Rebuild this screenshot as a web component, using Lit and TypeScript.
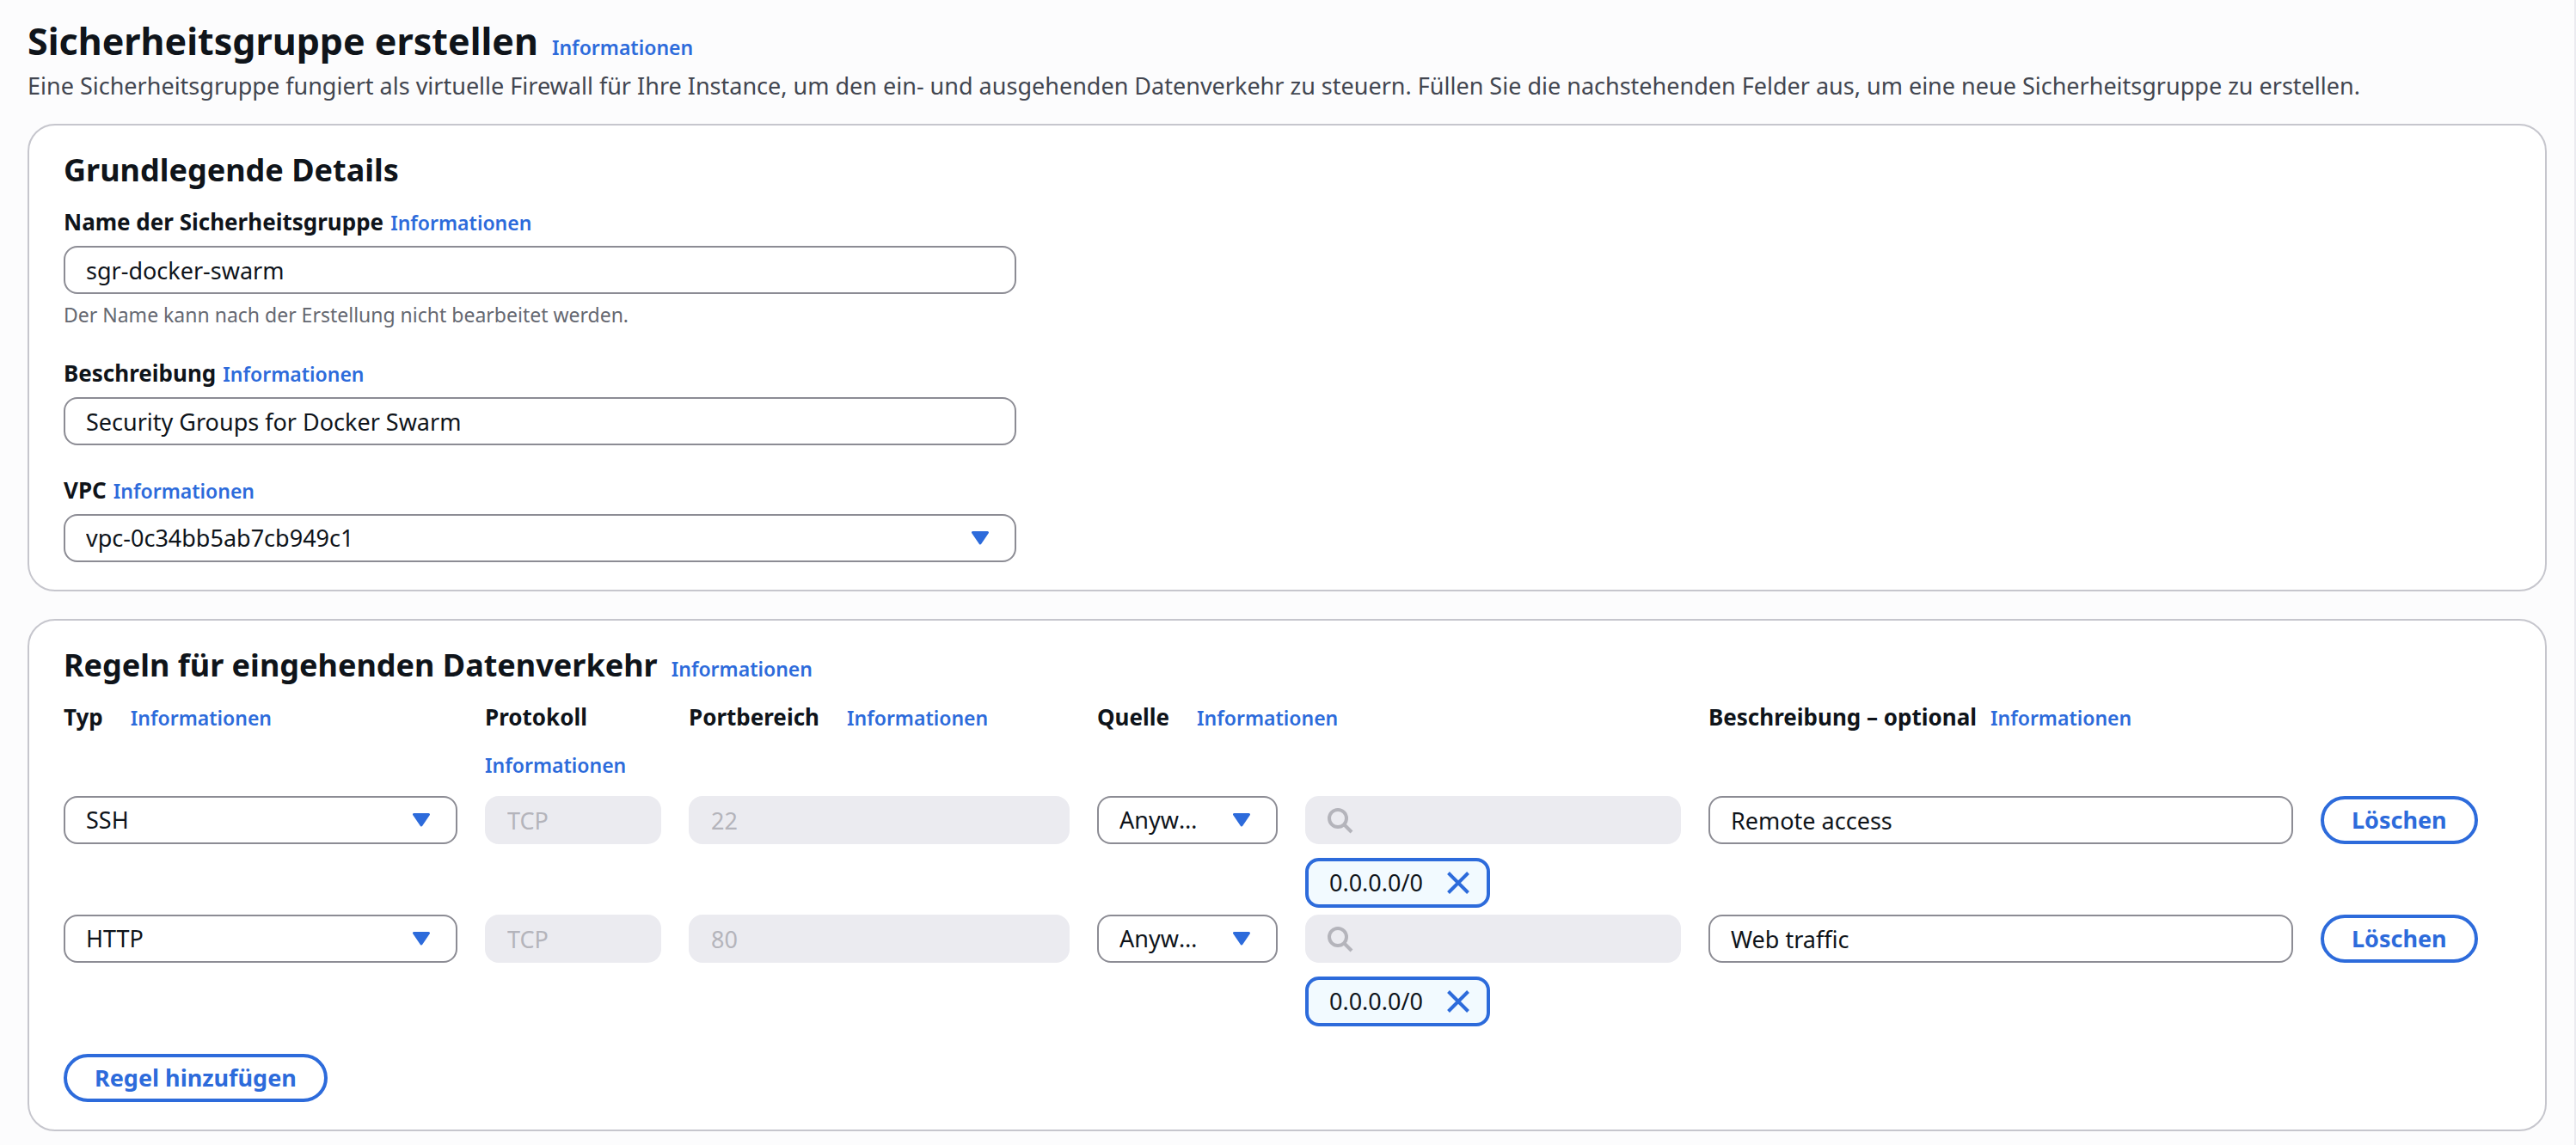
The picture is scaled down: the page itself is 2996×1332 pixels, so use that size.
import { LitElement, html, css } from "lit";
import { customElement, state } from "lit/decorators.js";

interface Rule {
  type: string;
  protocol: string;
  port: string;
  source: string;
  cidr: string;
  description: string;
}

const info = html`<a class="info" href="#info">Informationen</a>`;

@customElement("app-root")
export class AppRoot extends LitElement {
  static styles = css`
    :host {
      --blue: #2d6bdb;
      --ink: #0f141a;
      --field-line: #8c8c94;
      --card-line: #c6c6cd;
      display: block;
      box-sizing: border-box;
      min-height: 100vh;
      padding: 18px 32px 16px;
      border-right: 2px solid #ebebf0;
      background: #fcfcfd;
      color: var(--ink);
      font-family: "Noto Sans", "Open Sans", sans-serif;
      font-size: 27px;
      line-height: 40px;
    }
    *, *::before, *::after { box-sizing: border-box; }
    h1, h2, p { margin: 0; }
    h1 { font-size: 43px; line-height: 60px; font-weight: 700; }
    h2 { font-size: 36px; line-height: 48px; font-weight: 700; }
    .title { display: flex; align-items: baseline; gap: 16px; }
    .info { color: var(--blue); font-size: 23px; line-height: 36px; font-weight: 600; text-decoration: none; }
    .lead { color: #424650; line-height: 44px; }
    .card {
      border: 2px solid var(--card-line);
      border-radius: 32px;
      background: #fff;
      padding: 28px 40px 32px;
    }
    .details { margin-top: 22px; }
    .rules { margin-top: 32px; }
    .form { display: flex; flex-direction: column; gap: 32px; width: calc(40% - 30px); min-width: 600px; margin-top: 16px; }
    .label { display: flex; align-items: baseline; gap: 8px; margin-bottom: 8px; }
    .label label, .head { font-weight: 700; font-size: 26px; }
    .hint { color: #656871; font-size: 23px; line-height: 32px; margin-top: 8px; }
    input, select {
      display: block;
      width: 100%;
      height: 56px;
      margin: 0;
      padding: 0 24px;
      border: 2px solid var(--field-line);
      border-radius: 16px;
      background: #fff;
      color: var(--ink);
      font: inherit;
      appearance: none;
      text-overflow: ellipsis;
    }
    input:disabled { border-color: #ebebf0; background: #ebebf0; color: #b4b4bb; opacity: 1; }
    .pick { display: grid; align-items: center; }
    .pick > * { grid-area: 1 / 1; }
    .pick select { padding-right: 76px; }
    .caret { justify-self: end; width: 20px; height: 16px; margin-right: 32px; fill: var(--blue); stroke: var(--blue); pointer-events: none; }
    .grid {
      display: grid;
      grid-template-columns: 458fr 205fr 443fr 210fr 437fr 680fr 221fr;
      column-gap: 32px;
      align-items: start;
    }
    .head { display: flex; flex-wrap: wrap; align-items: baseline; align-content: flex-start; column-gap: 32px; row-gap: 18px; margin: 16px 0 18px; }
    .head.wide { grid-column: span 2; }
    .head.tight { column-gap: 16px; }
    .search { display: grid; align-items: center; }
    .search > * { grid-area: 1 / 1; }
    .glass { width: 32px; height: 32px; margin-left: 24px; pointer-events: none; }
    .source { min-height: 138px; }
    .token {
      display: inline-flex;
      align-items: center;
      gap: 28px;
      height: 58px;
      margin-top: 16px;
      padding: 0 20px 0 24px;
      border: 4px solid var(--blue);
      border-radius: 16px;
      background: #f2faff;
    }
    .dismiss { display: flex; padding: 0; border: 0; background: none; }
    .dismiss svg { width: 26px; height: 26px; stroke: var(--blue); }
    .btn {
      height: 56px;
      padding: 0 32px;
      border: 4px solid var(--blue);
      border-radius: 28px;
      background: #fff;
      color: var(--blue);
      font: inherit;
      font-weight: 700;
      white-space: nowrap;
      justify-self: start;
    }
    .add { display: block; margin-top: 24px; }
  `;

  @state() private rules: Rule[] = [
    { type: "SSH", protocol: "TCP", port: "22", source: "Anywhere-IPv4", cidr: "0.0.0.0/0", description: "Remote access" },
    { type: "HTTP", protocol: "TCP", port: "80", source: "Anywhere-IPv4", cidr: "0.0.0.0/0", description: "Web traffic" },
  ];

  private select(value: string, name: string, id = "") {
    return html`<div class="pick">
      <select id=${id} aria-label=${name}><option>${value}</option></select>
      <svg class="caret" viewBox="0 0 20 16" aria-hidden="true">
        <path d="M1.500 1.500h17L10 14z" stroke-width="3" stroke-linejoin="round" />
      </svg>
    </div>`;
  }

  private row(rule: Rule) {
    return html`
      ${this.select(rule.type, "Typ")}
      <input aria-label="Protokoll" .value=${rule.protocol} disabled />
      <input aria-label="Portbereich" .value=${rule.port} disabled />
      ${this.select(rule.source, "Quelle")}
      <div class="source">
        <div class="search">
          <input type="text" aria-label="Quelle suchen" disabled />
          <svg class="glass" viewBox="0 0 32 32" fill="none" stroke="#b4b4bb" stroke-width="4" aria-hidden="true">
            <circle cx="14" cy="14" r="10" /><path d="M21 21l9 9" />
          </svg>
        </div>
        <span class="token">${rule.cidr}
          <button class="dismiss" aria-label="Entfernen">
            <svg viewBox="0 0 26 26" fill="none" stroke-width="4" aria-hidden="true">
              <path d="M1.500 1.500l23 23M24.500 1.500l-23 23" />
            </svg>
          </button>
        </span>
      </div>
      <input aria-label="Beschreibung" .value=${rule.description} />
      <button class="btn">Löschen</button>
    `;
  }

  render() {
    return html`
      <header>
        <div class="title"><h1>Sicherheitsgruppe erstellen</h1>${info}</div>
        <p class="lead">Eine Sicherheitsgruppe fungiert als virtuelle Firewall für Ihre Instance, um den ein- und ausgehenden Datenverkehr zu steuern. Füllen Sie die nachstehenden Felder aus, um eine neue Sicherheitsgruppe zu erstellen.</p>
      </header>
      <section class="card details">
        <h2>Grundlegende Details</h2>
        <div class="form">
          <div>
            <div class="label"><label for="name">Name der Sicherheitsgruppe</label>${info}</div>
            <input id="name" .value=${"sgr-docker-swarm"} />
            <p class="hint">Der Name kann nach der Erstellung nicht bearbeitet werden.</p>
          </div>
          <div>
            <div class="label"><label for="description">Beschreibung</label>${info}</div>
            <input id="description" .value=${"Security Groups for Docker Swarm"} />
          </div>
          <div>
            <div class="label"><label for="vpc">VPC</label>${info}</div>
            ${this.select("vpc-0c34bb5ab7cb949c1", "VPC", "vpc")}
          </div>
        </div>
      </section>
      <section class="card rules">
        <div class="title"><h2>Regeln für eingehenden Datenverkehr</h2>${info}</div>
        <div class="grid">
          <div class="head"><span>Typ</span>${info}</div>
          <div class="head"><span>Protokoll</span>${info}</div>
          <div class="head"><span>Portbereich</span>${info}</div>
          <div class="head wide"><span>Quelle</span>${info}</div>
          <div class="head tight wide"><span>Beschreibung – optional</span>${info}</div>
          ${this.rules.map((rule) => this.row(rule))}
        </div>
        <button class="btn add">Regel hinzufügen</button>
      </section>
    `;
  }
}
